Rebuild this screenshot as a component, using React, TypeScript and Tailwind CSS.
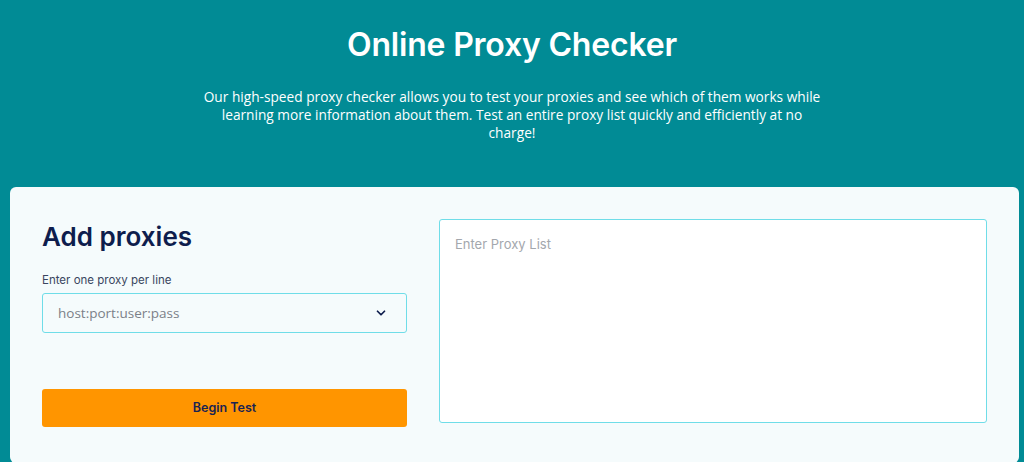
import { ChevronDown } from 'lucide-react'

export default function App() {
  return (
    <div className="min-h-[462px] w-full bg-[#018b95] overflow-hidden" style={{ fontFamily: 'Inter, "Liberation Sans", sans-serif' }}>
      {/* Hero */}
      <div className="flex flex-col items-center pt-[25px]">
        <h1 className="text-[32px] leading-[40px] font-semibold text-white tracking-[-0.2px]">Online Proxy Checker</h1>
        <p
          className="mt-[23px] w-[622px] text-center text-[13.7px] leading-[18px] text-white"
          style={{ fontFamily: '"Open Sans", "Liberation Sans", sans-serif' }}
        >
          Our high-speed proxy checker allows you to test your proxies and see which of them works while learning more information about them. Test an entire proxy list quickly and efficiently at no charge!
        </p>
      </div>

      {/* Card */}
      <div className="ml-[10px] mr-[5px] mt-[45px] rounded-[6px] bg-[#f5fbfc] pl-[32px] pr-[32px] pt-[32px] pb-[36px] flex gap-[32px]">
        <div className="w-[365px] shrink-0 flex flex-col">
          <h2 className="mt-[2px] text-[26px] leading-[32px] font-semibold text-[#0e1d4d]">Add proxies</h2>
          <label className="mt-[20px] text-[11.5px] leading-[14px] text-[#3a4660]">Enter one proxy per line</label>
          <div className="mt-[6px] h-[40px] rounded-[3px] border border-[#6fdde8] bg-[#f5fbfc] flex items-center justify-between pl-[15px] pr-[18px]">
            <span className="text-[13.5px] text-[#7b8088]" style={{ fontFamily: '"Open Sans", "Liberation Sans", sans-serif' }}>host:port:user:pass</span>
            <ChevronDown className="w-[14px] h-[14px] text-[#0e1d4d]" strokeWidth={3} />
          </div>
          <button className="mt-[56px] h-[38px] rounded-[3px] bg-[#ff9500] text-[12.5px] font-semibold text-[#1a2352]">
            Begin Test
          </button>
        </div>
        <div className="flex-1 h-[204px] rounded-[3px] border border-[#6fdde8] bg-white px-[15px] pt-[11px]">
          <span className="text-[13px] text-[#a3a7ad]">Enter Proxy List</span>
        </div>
      </div>
    </div>
  )
}
